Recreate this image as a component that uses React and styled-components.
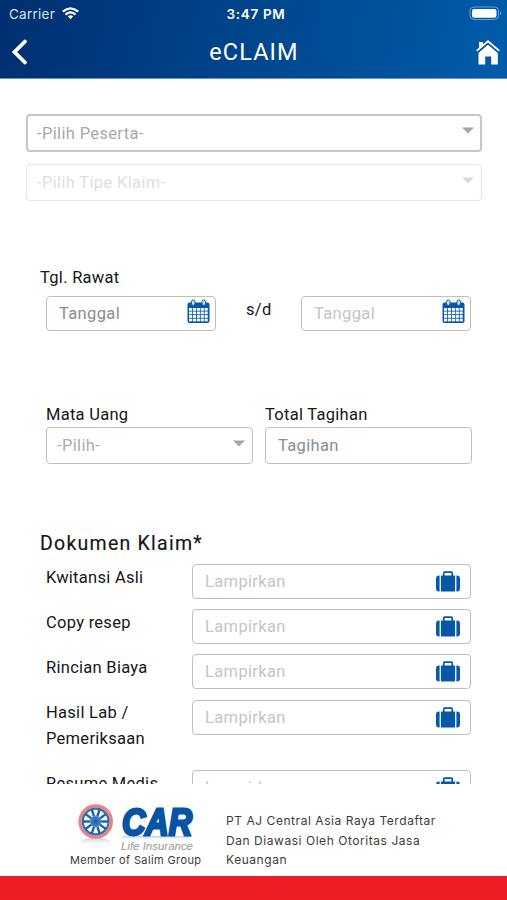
import React from "react"
import styled, { createGlobalStyle, ThemeProvider } from "styled-components"

const theme = {
  blue: "#0758a8",
  red: "#ee1c25",
  black: "#161616",
  border: "#bebebe",
  fontPri: `Roboto, "Liberation Sans", sans-serif`,
  fontSec: `Inter, "Liberation Sans", sans-serif`,
}

const GlobalStyle = createGlobalStyle`
  * {
    box-sizing: border-box;
  }

  body {
    margin: 0;
    background: #fff;
  }
`

const Screen = styled.div`
  display: flex;
  flex-direction: column;
  width: 507px;
  height: 900px;
  overflow: hidden;
  background: #fff;
  color: ${props => props.theme.black};
  font-family: ${props => props.theme.fontPri};
  font-size: 16.5px;
`

const Header = styled.header`
  flex: none;
  height: 79px;
  border-bottom: 1px solid #5f97cc;
  background: linear-gradient(100deg, #002f70 0%, #00468d 50%, #005cab 100%);
  color: #fff;
`

const StatusBar = styled.div`
  display: grid;
  grid-template-columns: 1fr auto 1fr;
  align-items: center;
  height: 27px;
  padding: 0 4px 0 9px;
  font-family: ${props => props.theme.fontSec};
  font-size: 13.5px;
`

const Carrier = styled.div`
  display: flex;
  align-items: center;
  gap: 7px;
  color: #d5e1ef;
  letter-spacing: 0.25px;
`

const Clock = styled.div`
  font-size: 13.5px;
  font-weight: 600;
  letter-spacing: 0.65px;
`

const BatteryIcon = styled.svg`
  justify-self: end;
`

const TitleBar = styled.div`
  display: grid;
  grid-template-columns: 1fr auto 1fr;
  align-items: center;
  height: 50px;
  padding: 0 7px 0 8px;

  h1 {
    margin: 0;
    font-size: 23.5px;
    font-weight: 400;
    line-height: 28px;
    letter-spacing: 1.1px;
  }

  svg {
    margin-left: 3px;
  }

  svg:last-child {
    justify-self: end;
  }
`

const Form = styled.main`
  flex: 1;
  min-height: 0;
  padding: 35px 36px 0 26px;
  overflow: hidden;
`

const Field = styled.div`
  display: flex;
  flex: none;
  align-items: center;
  justify-content: space-between;
  width: ${props => props.$width}px;
  height: ${props => props.$height || 35}px;
  padding: 0 ${props => props.$end || 5}px 0 ${props => props.$start || 12}px;
  border: ${props => props.$line || 1.5}px solid
    ${props => props.$border || props.theme.border};
  border-radius: 4px;
  color: ${props => props.$color || "#c5c5c5"};
  letter-spacing: 0.35px;
`

const Claimant = styled.section`
  display: flex;
  flex-direction: column;
  gap: 12px;
`

const Treatment = styled.section`
  margin-top: 65px;
  padding-left: 14px;
`

const Label = styled.div`
  height: ${props => props.$height || 24}px;
  line-height: 24px;
  letter-spacing: 0.28px;
`

const FieldRow = styled.div`
  display: flex;
  padding-left: 6px;
`

const Until = styled.div`
  width: 86px;
  padding-left: 30px;
  line-height: 28px;
  letter-spacing: 0.3px;
`

const Amounts = styled.section`
  display: flex;
  gap: 12px;
  margin-top: 72px;
  padding-left: 20px;
`

const Documents = styled.section`
  margin-top: 66px;
  padding-left: 14px;

  h2 {
    height: 34px;
    margin: 0;
    font-size: 19.5px;
    font-weight: 400;
    line-height: 28px;
    letter-spacing: 1.25px;
    -webkit-text-stroke: 0.15px ${props => props.theme.black};
  }
`

const DocumentRow = styled.div`
  display: flex;
  padding: 0 0 10.2px 6px;
`

const DocumentName = styled.div`
  width: 146px;
  min-height: 35px;
  padding-top: 0.6px;
  padding-bottom: ${props => (props.$wraps ? 8.6 : 0)}px;
  line-height: 25.5px;
  letter-spacing: 0.28px;
`

const Footer = styled.footer`
  display: flex;
  flex: none;
  height: 92px;
  background: #fff;
  color: #3b3b3b;
  font-family: ${props => props.theme.fontSec};
`

const Brand = styled.div`
  display: flex;
  flex-direction: column;
  width: 226px;
  padding: 16px 0 0 70px;
  font-size: 11px;
  letter-spacing: 0.38px;
  line-height: 16px;
  white-space: nowrap;

  svg {
    display: block;
  }
`

const Notice = styled.p`
  width: 240px;
  padding-right: 15px;
  margin: 27px 0 0;
  font-size: 12px;
  letter-spacing: 0.55px;
  line-height: 19.6px;
`

const BottomBar = styled.div`
  flex: none;
  height: 24px;
  background: ${props => props.theme.red};
`

const CaretIcon = styled.svg`
  margin-top: -5px;
`

const CalendarIcon = styled.svg`
  margin-top: -4px;
`

const Caret = ({ color = "#a6a6a6" }) => (
  <CaretIcon width="12" height="7" viewBox="0 0 12 7">
    <path d="M0 0.5H12L6 6.5Z" fill={color} />
  </CaretIcon>
)

const Wifi = () => (
  <svg width="17" height="13" viewBox="0 0 17 13" fill="none" stroke="#fff">
    <path d="M0.8 4.6Q8.5-1.8 16.2 4.6" strokeWidth="2.3" />
    <path d="M3.5 7.6Q8.5 3.3 13.5 7.6" strokeWidth="2.2" />
    <path d="M5.8 9.3Q8.5 7.3 11.2 9.3L8.5 12.3Z" fill="#fff" stroke="none" />
  </svg>
)

const Battery = () => (
  <BatteryIcon width="34" height="15" viewBox="0 0 34 15">
    <rect x="1" y="1" width="28.5" height="12.5" rx="3.8" fill="none" stroke="#6d9fce" />
    <rect x="3" y="2.9" width="24.5" height="8.8" rx="2.2" fill="#fff" />
    <path d="M31 5Q33 7.2 31 9.5Z" fill="#8fb6da" />
  </BatteryIcon>
)

const Back = () => (
  <svg width="18" height="28" viewBox="0 0 18 28">
    <path
      d="M14 3.5L3.5 14L14 24.5"
      fill="none"
      stroke="#fff"
      strokeWidth="3.8"
      strokeLinecap="round"
      strokeLinejoin="miter"
    />
  </svg>
)

const Home = () => (
  <svg width="24" height="25" viewBox="0 0 24 25">
    <path d="M3 2H7V6.5L3 10Z" fill="#fff" />
    <path d="M12 4.5L21.8 12.8V24.5H15.2V16.5H9.2V24.5H2.5V12.8Z" fill="#fff" />
    <path d="M1 12L12 2.7L23 12" fill="none" stroke="#00529d" strokeWidth="2.6" />
    <path d="M0.7 10.9L12 1.3L23.3 10.9" fill="none" stroke="#fff" strokeWidth="1.9" />
  </svg>
)

const Calendar = () => (
  <CalendarIcon width="23" height="25" viewBox="0 0 23 25">
    <rect x="0.5" y="3.5" width="22" height="20.5" rx="2" fill={theme.blue} />
    {[0, 1, 2, 3].map(row =>
      [0, 1, 2, 3, 4].map(col => (
        <rect
          key={`${row}-${col}`}
          x={2 + col * 3.9}
          y={9 + row * 3.55}
          width="3.1"
          height="2.7"
          fill="#fff"
        />
      ))
    )}
    <rect x="4.5" y="1" width="3.5" height="5.5" rx="1.7" fill="#cfe0f2" stroke={theme.blue} />
    <rect x="15" y="1" width="3.5" height="5.5" rx="1.7" fill="#cfe0f2" stroke={theme.blue} />
  </CalendarIcon>
)

const Suitcase = () => (
  <svg width="24" height="21" viewBox="0 0 24 21" fill={theme.blue}>
    <path d="M3.6 4.5V20.5H3Q0 20.5 0 17.5V7.5Q0 4.5 3 4.5Z" />
    <path d="M20.4 4.5V20.5H21Q24 20.5 24 17.5V7.5Q24 4.5 21 4.5Z" />
    <path d="M4.9 4.5H19.1V20.5H4.9Z" />
    <path
      d="M7.8 5V2Q7.8 1.2 8.6 1.2H15.4Q16.2 1.2 16.2 2V5"
      fill="none"
      stroke={theme.blue}
      strokeWidth="1.7"
    />
  </svg>
)

const Logo = () => (
  <svg width="128" height="52" viewBox="0 0 128 52">
    <defs>
      <linearGradient id="shade" x1="0" y1="0" x2="0" y2="1">
        <stop offset="0" stopColor="#7a93b5" stopOpacity="0.45" />
        <stop offset="1" stopColor="#fff" stopOpacity="0" />
      </linearGradient>
    </defs>
    <ellipse cx="25.5" cy="42" rx="15" ry="4" fill="url(#shade)" />
    <circle cx="25.7" cy="21.5" r="15.7" fill="#fff" stroke="#ee8080" strokeWidth="3.2" />
    <circle cx="25.7" cy="21.5" r="12.9" fill="none" stroke="#2f70b2" strokeWidth="2.2" />
    <g stroke="#1760a8" strokeWidth="2.4">
      {Array.from({ length: 10 }, (_, i) => (
        <path key={i} d="M25.7 21.5V9" transform={`rotate(${i * 36 + 18} 25.7 21.5)`} />
      ))}
    </g>
    <circle cx="25.7" cy="21.5" r="5.5" fill="#3778b7" stroke="#6f9fcd" />
    <circle cx="25.7" cy="21.5" r="1.8" fill="#1760a8" />
    <path d="M53 36H121L118 41H50Z" fill="url(#shade)" />
    <text
      x="52"
      y="34.5"
      textLength="70"
      lengthAdjust="spacingAndGlyphs"
      fill="#0754a5"
      stroke="#0754a5"
      strokeWidth="2.8"
      fontFamily="Liberation Sans, sans-serif"
      fontSize="37.5"
      fontWeight="700"
      fontStyle="italic"
      letterSpacing="0"
    >
      CAR
    </text>
    <text
      x="51"
      y="49.5"
      textLength="72"
      lengthAdjust="spacingAndGlyphs"
      fill="#999"
      fontFamily="Liberation Sans, sans-serif"
      fontSize="11.5"
      fontStyle="italic"
      letterSpacing="0"
    >
      Life Insurance
    </text>
  </svg>
)

const documents = [
  { name: "Kwitansi Asli" },
  { name: "Copy resep" },
  { name: "Rincian Biaya" },
  { name: "Hasil Lab / Pemeriksaan", wraps: true },
  { name: "Resume Medis" },
]

const App = () => (
  <ThemeProvider theme={theme}>
    <GlobalStyle />
    <Screen>
      <Header>
        <StatusBar>
          <Carrier>
            <span>Carrier</span>
            <Wifi />
          </Carrier>
          <Clock>3:47 PM</Clock>
          <Battery />
        </StatusBar>
        <TitleBar>
          <Back />
          <h1>eCLAIM</h1>
          <Home />
        </TitleBar>
      </Header>

      <Form>
        <Claimant>
          <Field $width={456} $height={38} $line={2} $start={9} $end={6} $border="#c6c6c6" $color="#a9a9a9">
            -Pilih Peserta-
            <Caret />
          </Field>
          <Field $width={456} $height={37} $start={10} $end={7} $border="#e6e6e6" $color="#dedede">
            -Pilih Tipe Klaim-
            <Caret color="#dadada" />
          </Field>
        </Claimant>

        <Treatment>
          <Label $height={30}>Tgl. Rawat</Label>
          <FieldRow>
            <Field $width={170} $color="#8c8c8c">
              Tanggal
              <Calendar />
            </Field>
            <Until>s/d</Until>
            <Field $width={170}>
              Tanggal
              <Calendar />
            </Field>
          </FieldRow>
        </Treatment>

        <Amounts>
          <div>
            <Label>Mata Uang</Label>
            <Field $width={207} $height={37} $start={10} $end={7} $color="#adadad">
              -Pilih-
              <Caret />
            </Field>
          </div>
          <div>
            <Label>Total Tagihan</Label>
            <Field $width={207} $height={37} $color="#8c8c8c">
              Tagihan
            </Field>
          </div>
        </Amounts>

        <Documents>
          <h2>Dokumen Klaim*</h2>
          {documents.map(({ name, wraps }) => (
            <DocumentRow key={name}>
              <DocumentName $wraps={wraps}>{name}</DocumentName>
              <Field $width={279} $end={10}>
                Lampirkan
                <Suitcase />
              </Field>
            </DocumentRow>
          ))}
        </Documents>
      </Form>

      <Footer>
        <Brand>
          <Logo />
          Member of Salim Group
        </Brand>
        <Notice>PT AJ Central Asia Raya Terdaftar Dan Diawasi Oleh Otoritas Jasa Keuangan</Notice>
      </Footer>
      <BottomBar />
    </Screen>
  </ThemeProvider>
)

export default App
